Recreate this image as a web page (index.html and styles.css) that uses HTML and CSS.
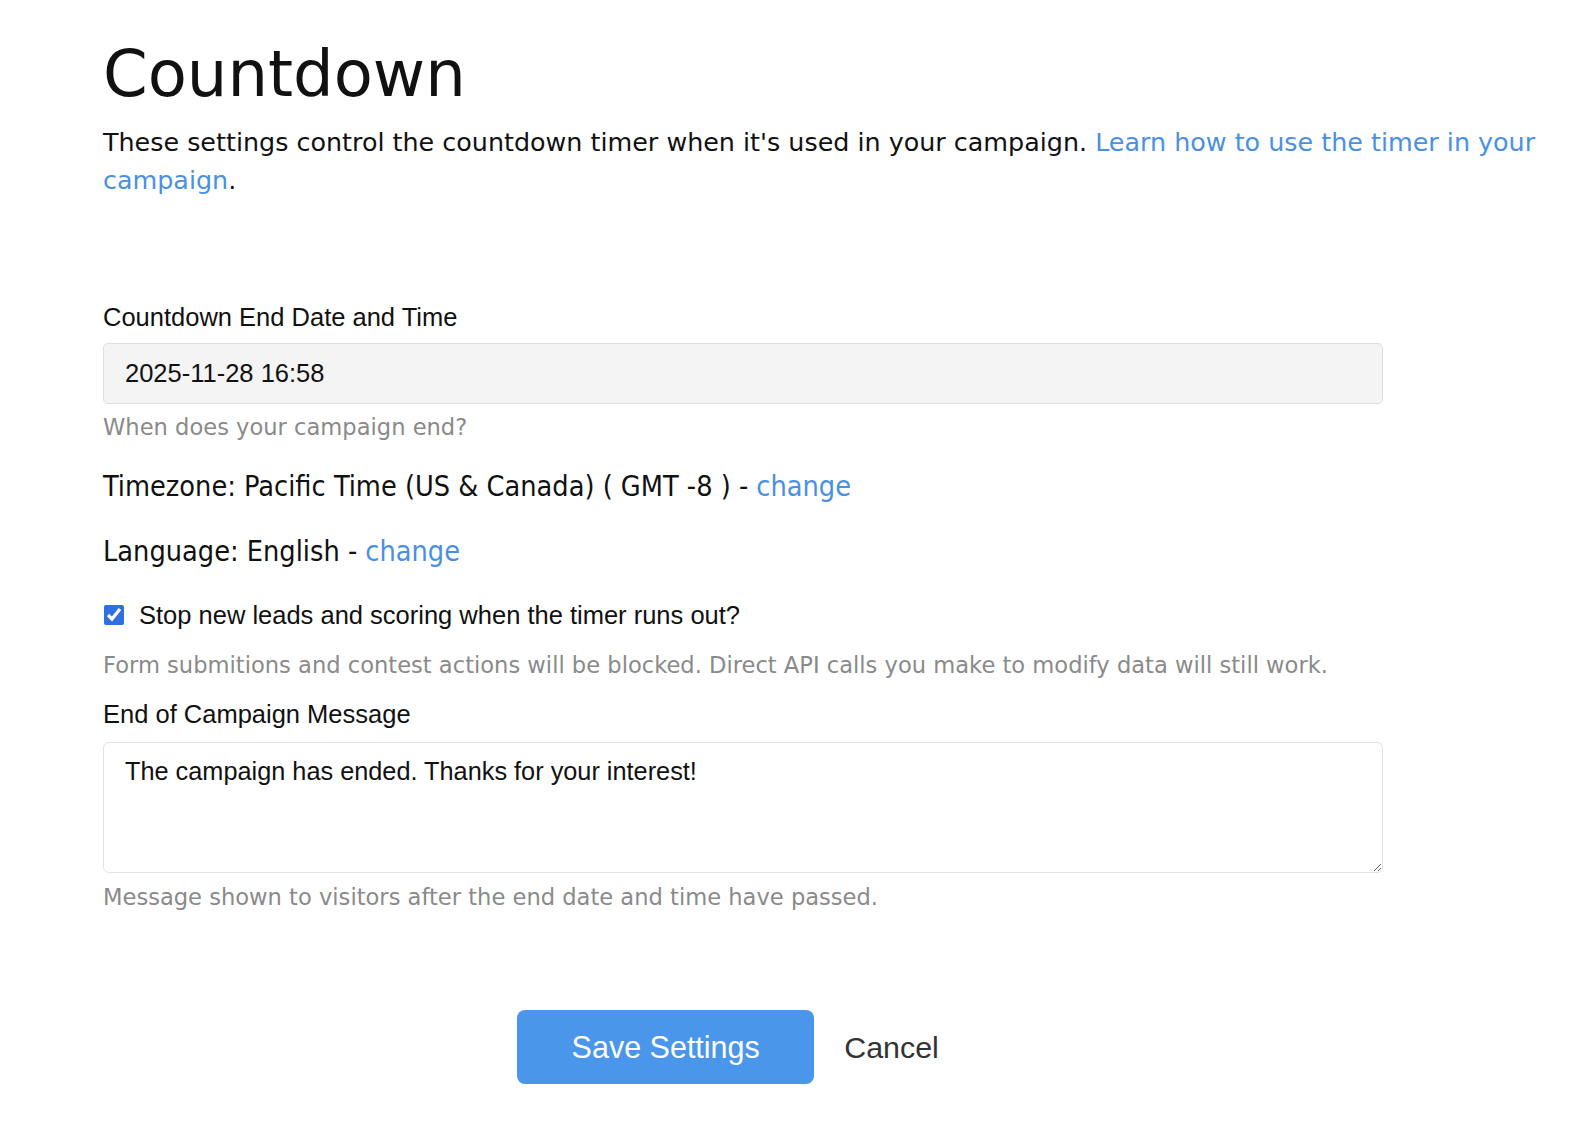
FILE: index.html
```html
<!DOCTYPE html>
<html lang="en">
<head>
  <meta charset="UTF-8" />
  <meta name="viewport" content="width=device-width, initial-scale=1.0" />
  <title>Countdown Settings</title>
  <link rel="stylesheet" href="styles.css">
</head>
<body>

<div class="page">
  <h1>Countdown</h1>

  <p class="intro">These settings control the countdown timer when it's used in your campaign. <a href="#">Learn how to use the timer in your campaign</a>.</p>

  <form class="settings">
    <label class="field-label" for="endDate">Countdown End Date and Time</label>
    <input class="text-input" type="text" id="endDate" value="2025-11-28 16:58">
    <div class="hint hint-date">When does your campaign end?</div>

    <div class="line tz">Timezone: Pacific Time (US &amp; Canada) ( GMT -8 ) - <a href="#">change</a></div>

    <div class="line lang">Language: English - <a href="#">change</a></div>

    <label class="check-row">
      <input type="checkbox" checked>
      <span>Stop new leads and scoring when the timer runs out?</span>
    </label>
    <div class="hint hint-block">Form submitions and contest actions will be blocked. Direct API calls you make to modify data will still work.</div>

    <label class="field-label msg-label" for="endMsg">End of Campaign Message</label>
    <textarea class="text-area" id="endMsg">The campaign has ended. Thanks for your interest!</textarea>
    <div class="hint hint-msg">Message shown to visitors after the end date and time have passed.</div>

    <div class="actions">
      <button type="button" class="btn-save">Save Settings</button>
      <a href="#" class="btn-cancel">Cancel</a>
    </div>
  </form>
</div>

</body>
</html>
```

FILE: styles.css
```css
body { margin: 0; background: #fff; color: #111; font-family: "DejaVu Sans", Verdana, sans-serif; }
a { color: #4a90e2; text-decoration: none; }
.page { padding: 32px 30px 40px 103px; }
h1 { font-size: 64px; font-weight: normal; margin: 0; line-height: 84px; }
.intro { font-size: 25.4px; line-height: 38px; margin: 7px 0 0; }
.settings { width: 1280px; margin-top: 103px; }
.field-label { display: block; font-family: "Liberation Sans", Arial, sans-serif; font-size: 25.5px; line-height: 30px; }
.text-input { display: block; box-sizing: border-box; width: 100%; height: 61px; margin-top: 11px; padding: 0 21px; background: #f4f4f4; border: 1px solid #dedede; border-radius: 5px; font-family: "Liberation Sans", Arial, sans-serif; font-size: 25.5px; color: #111; }
.hint { color: #8a8a8a; font-size: 22.6px; line-height: 30px; }
.hint-date { margin-top: 8px; }
.hint-block { margin-top: 20px; }
.hint-msg { margin-top: 9px; }
.line { font-family: "DejaVu Sans Condensed", "DejaVu Sans", sans-serif; font-size: 28.6px; line-height: 34px; }
.tz { margin-top: 27px; }
.lang { margin-top: 31px; }
.check-row { display: flex; align-items: center; gap: 15px; margin-top: 32px; font-family: "Liberation Sans", Arial, sans-serif; font-size: 25.5px; line-height: 30px; }
.check-row input { width: 20px; height: 20px; margin: 0 0 0 1px; accent-color: #2f6fde; }
.msg-label { margin-top: 19px; }
.text-area { display: block; box-sizing: border-box; width: 100%; height: 131px; margin-top: 13px; padding: 14px 21px; border: 1px solid #e2e2e2; border-radius: 6px; font-family: "Liberation Sans", Arial, sans-serif; font-size: 25.3px; color: #111; resize: vertical; }
.actions { display: flex; justify-content: center; align-items: center; gap: 30px; margin-top: 98px; }
.btn-save { width: 297px; height: 74px; border: none; border-radius: 8px; background: #4a96ea; color: #fff; font-family: "Liberation Sans", Arial, sans-serif; font-size: 30.5px; }
.btn-cancel { color: #333; font-family: "Liberation Sans", Arial, sans-serif; font-size: 30.4px; padding-right: 30px; }
```
